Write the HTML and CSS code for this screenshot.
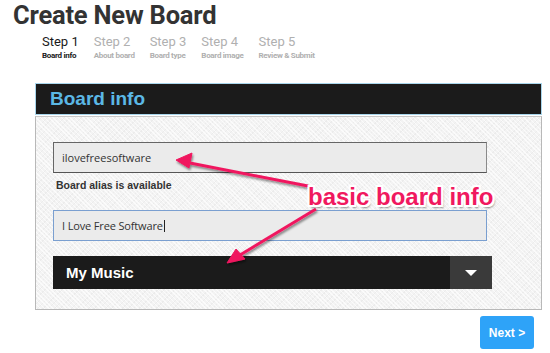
FILE: index.html
```html
<!DOCTYPE html>
<html lang="en-US">
<head>
	<meta charset="UTF-8">
	<title>Create New Board</title>
	<link rel="stylesheet" href="styles.css">
</head>
<body>
	<h1 class="title">Create New Board</h1>

	<ul class="steps">
		<li class="step active"><span class="step-num">Step 1</span><span class="step-label">Board info</span></li>
		<li class="step"><span class="step-num">Step 2</span><span class="step-label">About board</span></li>
		<li class="step"><span class="step-num">Step 3</span><span class="step-label">Board type</span></li>
		<li class="step"><span class="step-num">Step 4</span><span class="step-label">Board image</span></li>
		<li class="step"><span class="step-num">Step 5</span><span class="step-label">Review &amp; Submit</span></li>
	</ul>

	<div class="form">
		<div class="form-head">Board info</div>
		<div class="panel">
			<div class="field alias">ilovefreesoftware</div>
			<div class="hint">Board alias is available</div>
			<div class="field name">I Love Free Software<span class="caret"></span></div>
			<div class="select">
				<span class="select-value">My Music</span>
				<span class="select-btn"><span class="tri"></span></span>
			</div>
		</div>
		<div class="actions">
			<button class="next">Next &gt;</button>
		</div>
	</div>

	<!-- annotation drawn over the screenshot -->
	<svg class="arrows" width="550" height="353" viewBox="0 0 550 353">
		<defs>
			<filter id="shadow" x="-10%" y="-10%" width="120%" height="120%">
				<feDropShadow dx="1" dy="2" stdDeviation="1" flood-color="#000" flood-opacity="0.45"/>
			</filter>
		</defs>
		<g filter="url(#shadow)" fill="#f0195f" stroke="#f0195f" stroke-linejoin="round">
			<line x1="308" y1="186" x2="190" y2="163" stroke-width="3"/>
			<polygon points="176,160 192,153 189,168" stroke-width="1"/>
			<line x1="316" y1="209" x2="240" y2="255" stroke-width="3"/>
			<polygon points="227,263 236,249 245,259" stroke-width="1"/>
		</g>
	</svg>
	<div class="note">basic board info</div>
</body>
</html>
```

FILE: styles.css
```css
body
{
	margin: 0;
	font-family: Roboto, "Liberation Sans", sans-serif;
	background: #fff;
	width: 550px;
	height: 353px;
	position: relative;
	overflow: hidden;
}

.title
{
	margin: 0;
	padding: 1px 0 0 13px;
	font-size: 25.5px;
	font-weight: 700;
	line-height: 29px;
	color: #333;
	letter-spacing: -0.2px;
}

.steps
{
	list-style: none;
	margin: 3px 0 0 42px;
	padding: 0;
	display: flex;
	gap: 15px;
}

.step
{
	display: flex;
	flex-direction: column;
	color: #b0b0b0;
}

.step-num
{
	font-size: 13px;
	line-height: 17px;
}

.step-label
{
	font-size: 8px;
	font-weight: 700;
	line-height: 10px;
	margin-top: 1px;
	letter-spacing: -0.3px;
}

.step.active
{
	color: #1a1a1a;
}

.form
{
	margin: 22px 0 0 35px;
	width: 507px;
}

.form-head
{
	height: 30px;
	background: #1b1b1b;
	border: 1px solid #a9d6ec;
	color: #5bb8e6;
	font-family: "Liberation Sans", Arial, sans-serif;
	font-weight: 700;
	font-size: 19px;
	line-height: 30px;
	padding-left: 14px;
}

.panel
{
	margin-top: 1px;
	border: 1px solid #b8b8b8;
	border-top-color: #c8c8c8;
	padding: 25px 0 20px 17px;
	background-color: #f3f3f3;
	background-image:
		repeating-linear-gradient(45deg, rgba(255,255,255,0.7) 0 1px, transparent 1px 3px),
		repeating-linear-gradient(-45deg, rgba(0,0,0,0.03) 0 1px, transparent 1px 4px);
}

.field
{
	box-sizing: border-box;
	width: 434px;
	height: 31px;
	background: #ebebeb;
	font-family: "Open Sans", sans-serif;
	font-size: 11px;
	line-height: 29px;
	padding-left: 8px;
	color: #333;
}

.alias
{
	border: 1px solid #666;
	border-right-color: #8a8a8a;
	border-bottom-color: #555;
}

.name
{
	border: 1px solid #7a9fd0;
	letter-spacing: -0.15px;
}

.caret
{
	display: inline-block;
	width: 1px;
	height: 12px;
	background: #222;
	vertical-align: -2px;
	margin-left: 1px;
}

.hint
{
	font-family: "Liberation Sans", Arial, sans-serif;
	font-size: 10.5px;
	font-weight: 700;
	color: #333;
	margin: 5px 0 0 3px;
	line-height: 14px;
	height: 32px;
}

.select
{
	margin-top: 15px;
	width: 439px;
	height: 33px;
	display: flex;
	background: #1b1b1b;
}

.select-value
{
	flex: 1;
	color: #fff;
	font-family: "Liberation Sans", Arial, sans-serif;
	font-weight: 700;
	font-size: 15px;
	line-height: 33px;
	padding-left: 13px;
}

.select-btn
{
	width: 42px;
	background: #3a3a3a;
	display: flex;
	align-items: center;
	justify-content: center;
}

.tri
{
	width: 0;
	height: 0;
	border-left: 6px solid transparent;
	border-right: 6px solid transparent;
	border-top: 6px solid #fff;
}

.actions
{
	display: flex;
	justify-content: flex-end;
	padding: 6px 8px 0 0;
}

.next
{
	width: 54px;
	height: 33px;
	border: 0;
	border-radius: 3px;
	background: #2ea3f8;
	color: #fff;
	font-family: "Liberation Sans", Arial, sans-serif;
	font-weight: 700;
	font-size: 12px;
	padding: 0;
}

.arrows
{
	position: absolute;
	left: 0;
	top: 0;
	pointer-events: none;
}

.note
{
	position: absolute;
	left: 308px;
	top: 183px;
	font-family: "Liberation Sans", Arial, sans-serif;
	font-weight: 700;
	font-size: 24px;
	line-height: 28px;
	color: #f0195f;
	text-shadow:
		-2px 0 0 #fff, 2px 0 0 #fff, 0 -2px 0 #fff, 0 2px 0 #fff,
		-2px -2px 0 #fff, 2px 2px 0 #fff, -2px 2px 0 #fff, 2px -2px 0 #fff,
		2px 3px 2px rgba(0,0,0,0.45);
}
```
